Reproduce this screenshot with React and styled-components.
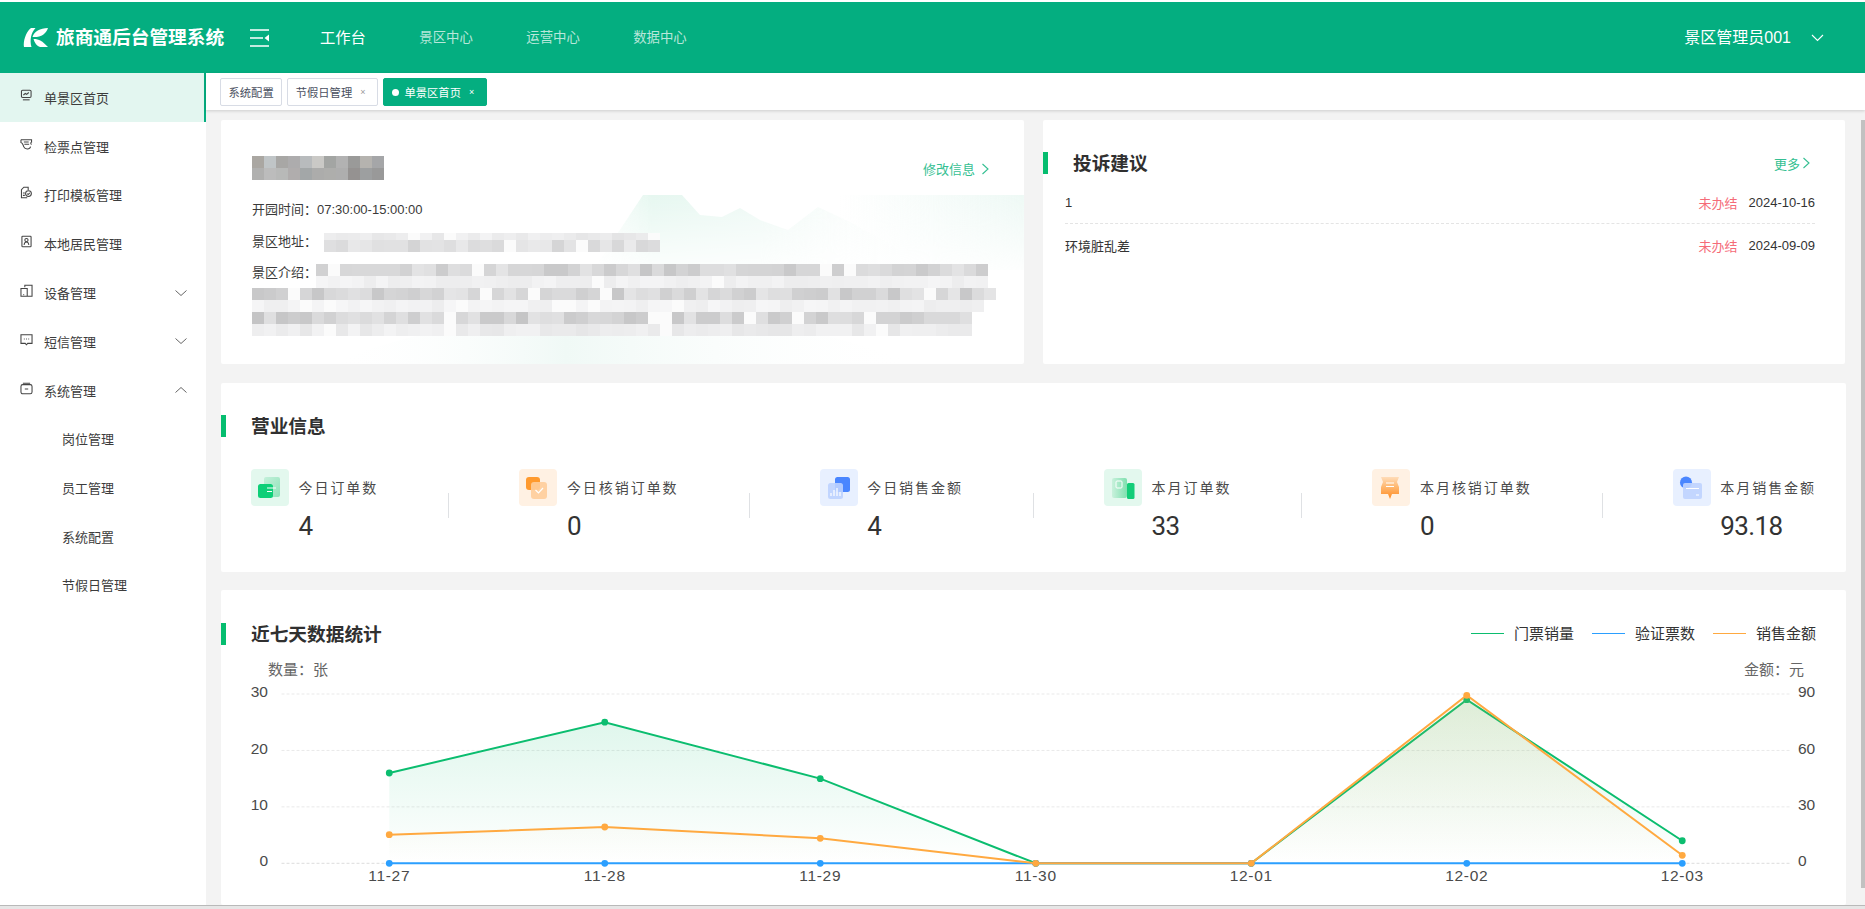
import React from "react";
import styled, { createGlobalStyle } from "styled-components";

const GREEN = "#04ae80";
const FONT = `"Liberation Sans", "Noto Sans CJK SC", sans-serif`;

const GlobalStyle = createGlobalStyle`
  html, body { margin: 0; padding: 0; background: #fff; }
  body { font-family: ${FONT}; color: #333; }
  * { box-sizing: border-box; }
`;

const Page = styled.div`
  width: 1865px;
  height: 909px;
  overflow: hidden;
  display: flex;
  flex-direction: column;
  padding-top: 2px;
  background: #fff;
`;

/* ---------- header ---------- */
const Header = styled.header`
  height: 71px;
  flex: none;
  display: flex;
  align-items: center;
  background: ${GREEN};
  color: #fff;
  padding: 0 41px 0 23px;
`;
const LogoTitle = styled.div`
  margin: 0 0 4px 8px;
  font-size: 18.7px;
  font-weight: 700;
  width: 168px;
  white-space: nowrap;
`;
const Collapse = styled.svg`
  width: 19px;
  height: 18px;
  margin-left: 26px;
`;
const Nav = styled.nav`
  display: flex;
  align-items: center;
  gap: 53.4px;
  margin: 0 0 4px 51px;
`;
const NavItem = styled.a`
  font-size: ${p => (p.$active ? "15.3px" : "13.4px")};
  color: ${p => (p.$active ? "#fff" : "rgba(255,255,255,.72)")};
`;
const User = styled.div`
  margin-left: auto;
  display: flex;
  align-items: center;
  gap: 20px;
  font-size: 16px;
  span { margin-bottom: 4px; }
  svg { width: 13px; height: 13px; }
`;

/* ---------- sidebar ---------- */
const Body = styled.div`
  flex: 1;
  min-height: 0;
  display: flex;
`;
const Side = styled.aside`
  width: 206px;
  flex: none;
  background: #fff;
`;
const SideRow = styled.div`
  height: 48.8px;
  display: flex;
  align-items: center;
  padding-left: 20px;
  font-size: 13px;
  color: #3c3c3c;
  background: ${p => (p.$active ? "#e3f6f0" : "transparent")};
  border-right: 2px solid ${p => (p.$active ? GREEN : "transparent")};
`;
const SideIcon = styled.svg`
  width: 13px;
  height: 13px;
  flex: none;
  margin-right: 11px;
  margin-top: -4px;
`;
const SideChevron = styled.svg`
  width: 12px;
  height: 12px;
  margin-left: auto;
  margin-right: 17px;
`;
const SubRow = styled.div`
  height: 48.6px;
  display: flex;
  align-items: center;
  padding-left: 62px;
  font-size: 13px;
  color: #3c3c3c;
`;

/* ---------- right part ---------- */
const Main = styled.main`
  flex: 1;
  min-width: 0;
  display: flex;
  flex-direction: column;
`;
const TabBar = styled.div`
  height: 37px;
  flex: none;
  display: flex;
  gap: 5px;
  padding: 5px 0 0 14px;
  background: #fff;
  box-shadow: 0 1px 3px rgba(0, 0, 0, 0.16);
  position: relative;
`;
const Tab = styled.div`
  height: 28px;
  display: flex;
  align-items: center;
  padding: 0 ${p => (p.$closable ? "12px" : "7.5px")} 0 ${p => (p.$active ? "8px" : "7.5px")};
  font-size: 11.3px;
  border-radius: 2px;
  border: 1px solid ${p => (p.$active ? GREEN : "#d8dce5")};
  background: ${p => (p.$active ? GREEN : "#fff")};
  color: ${p => (p.$active ? "#fff" : "#495060")};
`;
const TabDot = styled.i`
  width: 7px;
  height: 7px;
  border-radius: 50%;
  background: #fff;
  margin-right: 5px;
`;
const TabClose = styled.span`
  font-size: 9px;
  margin-left: 8px;
  color: ${p => (p.$light ? "#fff" : "#9a9a9a")};
`;
const Scroller = styled.div`
  flex: 1;
  min-height: 0;
  display: flex;
  background: #f3f3f3;
`;
const Content = styled.div`
  flex: 1;
  min-width: 0;
  padding: 10px 15px 0 15px;
`;
const Track = styled.div`
  width: 4px;
  flex: none;
  padding-top: 10px;
  background: #f3f3f3;
`;
const Thumb = styled.div`
  height: 768px;
  background: #c1c1c1;
`;
const TopGrid = styled.div`
  display: grid;
  grid-template-columns: 803px 802px;
  gap: 19px;
  height: 244px;
`;
const Card = styled.section`
  background: #fff;
  border-radius: 2px;
  position: relative;
  overflow: hidden;
  padding-top: ${p => p.$top || 0}px;
`;
const Art = styled.svg`
  position: absolute;
  inset: 0;
  width: 100%;
  height: 100%;
`;
const InfoBody = styled.div`
  position: relative;
  padding: 36px 34px 0 31px;
`;
const InfoHead = styled.div`
  height: 25px;
  display: flex;
  align-items: center;
  justify-content: flex-end;
  margin-bottom: 13px;
`;
const MoreLink = styled.a`
  display: flex;
  align-items: center;
  font-size: 13px;
  color: #35bf92;
  gap: ${p => p.$gap || 0}px;
  svg { width: 10px; height: 12px; }
`;
const InfoLine = styled.div`
  font-size: 13px;
  height: 31.6px;
  line-height: 31.6px;
  color: #3a3a3a;
`;
const SectionHead = styled.div`
  height: 22px;
  display: flex;
  align-items: center;
  padding-right: ${p => p.$right || 30}px;
`;
const Mark = styled.i`
  width: 5px;
  height: 22px;
  background: #05bd6f;
`;
const SectionTitle = styled.h2`
  margin: 0 0 4px 25px;
  font-size: 18.7px;
  font-weight: 700;
  color: #303030;
`;
const HeadEnd = styled.div`
  margin-left: auto;
`;
const Complaints = styled.div`
  margin-top: 8px;
  padding: 0 30px 0 22px;
`;
const ComplaintRow = styled.div`
  height: 42px;
  display: flex;
  align-items: center;
  font-size: 13px;
  color: #333;
  border-bottom: ${p => (p.$last ? "none" : "1px dashed #e4e4e4")};
`;
const Status = styled.span`
  margin-left: auto;
  color: #f56b78;
`;
const DateText = styled.span`
  margin-left: 11px;
`;
const StatsCard = styled(Card)`
  height: 189px;
  margin-top: 19px;
`;
const StatsRow = styled.div`
  margin-top: 32px;
  padding: 0 30px;
  display: flex;
  justify-content: space-between;
  align-items: flex-start;
`;
const Stat = styled.div`
  display: flex;
  gap: 9.5px;
`;
const StatIcon = styled.div`
  width: 38px;
  height: 37px;
  border-radius: 4px;
  background: ${p => p.$bg};
  svg { display: block; width: 38px; height: 37px; }
`;
const StatText = styled.div`
  padding-top: 9px;
`;
const StatLabel = styled.div`
  font-size: 14px;
  line-height: 20px;
  letter-spacing: 1.95px;
  color: #4a4a4a;
  white-space: nowrap;
`;
const StatValue = styled.div`
  margin-top: 13px;
  font-family: Roboto, sans-serif;
  font-size: 26px;
  line-height: 30px;
  letter-spacing: -0.6px;
  color: #333;
`;
const StatDivider = styled.i`
  width: 1px;
  height: 25px;
  margin-top: 24px;
  background: #dfe1e4;
`;
const ChartCard = styled(Card)`
  height: 315px;
  margin-top: 18px;
`;
const Legend = styled.div`
  display: flex;
  gap: 18.5px;
`;
const LegendItem = styled.div`
  display: flex;
  align-items: center;
  font-size: 15px;
  color: #333;
  margin-bottom: 4px;
  &::before {
    content: "";
    width: 33px;
    height: 1.5px;
    margin: 3px 9.5px 0 0;
    background: ${p => p.$color};
  }
`;
const ChartSvg = styled.svg`
  display: block;
  margin-top: 15px;
  width: 1624px;
  height: 245px;
  text {
    font-family: ${FONT};
    font-size: 15.5px;
    fill: #4a4a4a;
  }
  .unit { fill: #666; font-size: 15px; }
  .day { letter-spacing: 0.7px; }
`;
const BottomEdge = styled.div`
  height: 4px;
  flex: none;
  background: #e6e6e6;
  border-top: 1px solid #b9b9b9;
`;

/* ---------- drawings ---------- */
const Stroke = { fill: "none", stroke: "#444", strokeWidth: 1.1 };

const sideIcons = {
  monitor: (
    <g {...Stroke}>
      <rect x="1.5" y="1" width="10" height="7.5" rx="1.2" />
      <path d="M3.5 6l2-1.6 1.4 1 2.2-2" />
      <path d="M3 11h7" />
    </g>
  ),
  ticket: (
    <g {...Stroke}>
      <path d="M1 1.5h11v2.5a1.3 1.3 0 0 0 0 2.4" />
      <path d="M1 1.5v3c2 .4 2 2.4 3 4.5 1 2.6 6 3.4 7-.2" />
      <path d="M4 4h5M4.5 6.3h5" />
    </g>
  ),
  print: (
    <g {...Stroke}>
      <path d="M7.5 12H1.5V3.5L4 1h4.5v3" />
      <circle cx="8.8" cy="7.6" r="3" />
      <path d="M7.5 7.6l1 1 1.6-1.8M3 7h2M3 9.5h2" />
    </g>
  ),
  id: (
    <g {...Stroke}>
      <rect x="2" y="1" width="9.5" height="11" rx=".8" />
      <circle cx="6.7" cy="5" r="1.7" />
      <path d="M4.2 10c.3-2 1.4-3 2.5-3s2.2 1 2.5 3" />
    </g>
  ),
  device: (
    <g {...Stroke}>
      <path d="M5 3V1h7.5v11.5H1V4.5h6.5v8" />
      <path d="M3.5 10.8h.8" />
    </g>
  ),
  chat: (
    <g {...Stroke}>
      <path d="M1 1.5h11.5v9H8l-1.3 1.5-1.3-1.5H1z" />
      <path d="M4 6h.9M6.3 6h.9M8.6 6h.9" />
    </g>
  ),
  box: (
    <g {...Stroke}>
      <rect x="1" y="2.5" width="11.5" height="9.5" rx="1.8" />
      <path d="M3 1h7.5M5 7h3.5" />
    </g>
  )
};

const SideGlyph = ({ name }) => <SideIcon viewBox="0 0 13.5 13">{sideIcons[name]}</SideIcon>;

const Chevron = ({ up, color = "#666" }) => (
  <SideChevron viewBox="0 0 12 12">
    <path d={up ? "M.5 8.5L6 3.5l5.5 5" : "M.5 3.5L6 8.5l5.5-5"} fill="none" stroke={color} strokeWidth="1" />
  </SideChevron>
);

const RightArrow = () => (
  <svg viewBox="0 0 10 12">
    <path d="M2.5 1l5.5 5-5.5 5" fill="none" stroke="#35bf92" strokeWidth="1.1" />
  </svg>
);

const Logo = () => (
  <svg width="25" height="19" viewBox="0 0 25 19">
    <path d="M1 19C0 14 2.5 4 8 0h4.5C8 5 6.5 12 8.5 19z" fill="#fff" />
    <path d="M9.5 9C11 3 17 .5 25 0c-2 6-7 9.5-15.5 9z" fill="#fff" />
    <path d="M10.5 11c6 0 8.5 2 14.5 8h-8c-3-1-5.5-4-6.5-8z" fill="#fff" />
  </svg>
);

const StatIcons = {
  orders: (
    <>
      <defs>
        <linearGradient id="g1" x1="0" y1="0" x2="1" y2="1">
          <stop offset="0" stopColor="#c4f0da" />
          <stop offset="1" stopColor="#8fe3b9" />
        </linearGradient>
      </defs>
      <rect x="13" y="8" width="16" height="20" rx="2" fill="url(#g1)" />
      <rect x="7" y="15" width="15" height="14" rx="2.5" fill="#0ecf78" />
      <path d="M16 19h9M16 22.5h5" stroke="#fff" strokeWidth="1" />
    </>
  ),
  verify: (
    <>
      <rect x="7" y="8" width="14" height="13" rx="3" fill="#ff9a2e" />
      <rect x="12" y="13" width="16" height="17" rx="3" fill="#ffcd9a" opacity=".9" />
      <path d="M16.5 21l3 3 4.5-5" fill="none" stroke="#fff" strokeWidth="1.2" />
    </>
  ),
  sales: (
    <>
      <rect x="15" y="8" width="15" height="15" rx="2.5" fill="#4a86ff" />
      <rect x="8" y="14" width="15" height="16" rx="2.5" fill="#bcd2ff" opacity=".9" />
      <path d="M11 27v-3M14 27v-6M17 27v-8M20 27v-4" stroke="#fff" strokeWidth="1.2" />
    </>
  ),
  monthOrders: (
    <>
      <defs>
        <linearGradient id="g4" x1="0" y1="0" x2="1" y2="0">
          <stop offset="0" stopColor="#c9f1dc" />
          <stop offset="1" stopColor="#7fe0af" />
        </linearGradient>
      </defs>
      <rect x="8" y="9" width="15" height="20" rx="2" fill="url(#g4)" />
      <rect x="23" y="14" width="7.5" height="16" rx="1.5" fill="#12cd78" />
      <rect x="12" y="12" width="6" height="7" rx="1" fill="none" stroke="#fff" strokeWidth="1" />
    </>
  ),
  monthVerify: (
    <>
      <defs>
        <linearGradient id="g5" x1="0" y1="0" x2="0" y2="1">
          <stop offset="0" stopColor="#ffdcb8" />
          <stop offset=".45" stopColor="#ffb870" />
          <stop offset="1" stopColor="#ff8a20" />
        </linearGradient>
      </defs>
      <path d="M9 8h18l-2 5 2 5v7H20l-2 5-2-5H9v-7l2-5z" fill="url(#g5)" />
      <path d="M14 14h8M14 17.5h8" stroke="#fff" strokeWidth="1.2" />
    </>
  ),
  monthSales: (
    <>
      <circle cx="13" cy="13.5" r="6" fill="#4a86ff" />
      <rect x="10" y="14" width="19" height="16" rx="2" fill="#bfd4ff" opacity=".92" />
      <path d="M13 19.5h13M23 26h3" stroke="#fff" strokeWidth="1.2" />
    </>
  )
};

// pixelated cover over the hidden text, colours spread per cell
const tone = (base, spread, row, i) => {
  const n = Math.sin((i + 3) * 12.9898 + row * 78.233) * 43758.5453;
  const r = n - Math.floor(n);
  if (r > 0.93) return "#fbfbfb";
  const v = Math.round(base + (r - 0.5) * spread);
  return `rgb(${v},${v},${v + 1})`;
};
const mosaic = [
  { y: 233, h: 7, x0: 324, x1: 660, base: 236, spread: 16 },
  { y: 240, h: 12, x0: 324, x1: 660, base: 224, spread: 24 },
  { y: 264, h: 12, x0: 316, x1: 996, base: 214, spread: 32 },
  { y: 276, h: 12, x0: 316, x1: 996, base: 241, spread: 10 },
  { y: 288, h: 12, x0: 252, x1: 996, base: 216, spread: 34 },
  { y: 300, h: 12, x0: 252, x1: 984, base: 242, spread: 10 },
  { y: 312, h: 12, x0: 252, x1: 972, base: 212, spread: 34 },
  { y: 324, h: 12, x0: 252, x1: 978, base: 237, spread: 14 }
];
const nameCells = [
  ["#aaa7a2", "#c0c5c7", "#a8a7a5", "#adacad", "#b8bbbd", "#cac9c6", "#a3a5a3", "#b2b2b2", "#9a9a99", "#b5b3af", "#a5a6a8"],
  ["#b0b0af", "#bcbcbc", "#b8b9b8", "#b0adad", "#a3a7a8", "#acacab", "#aeaeac", "#aeaeae", "#959291", "#9d9fa0", "#999999"]
];

const InfoArt = () => (
  <Art viewBox="221 120 803 244" preserveAspectRatio="none">
    <defs>
      <linearGradient id="fadeDown" x1="0" y1="0" x2="0" y2="1">
        <stop offset="0" stopColor="#fff" />
        <stop offset="1" stopColor="#000" />
      </linearGradient>
      <mask id="fadeMask" maskUnits="userSpaceOnUse" x="221" y="190" width="803" height="100">
        <rect x="221" y="195" width="803" height="85" fill="url(#fadeDown)" />
      </mask>
      <linearGradient id="hill" x1="0" y1="0" x2="1" y2="0">
        <stop offset="0" stopColor="#e6f7f0" stopOpacity="0" />
        <stop offset=".2" stopColor="#e6f7f0" />
        <stop offset=".55" stopColor="#eef9f5" />
        <stop offset="1" stopColor="#f4fbf8" stopOpacity="0" />
      </linearGradient>
      <linearGradient id="far" x1="0" y1="0" x2="1" y2="0">
        <stop offset="0" stopColor="#eef9f5" stopOpacity="0" />
        <stop offset="1" stopColor="#eef9f5" />
      </linearGradient>
      <linearGradient id="low" x1="0" y1="0" x2="1" y2="0">
        <stop offset="0" stopColor="#fff" stopOpacity="0" />
        <stop offset=".4" stopColor="#f0f9f6" />
        <stop offset="1" stopColor="#fff" stopOpacity="0" />
      </linearGradient>
    </defs>
    <g mask="url(#fadeMask)">
      <path d="M590 275L643 195H682L700 215L722 217L740 208L760 220L788 230L818 207L850 222L900 250V290H590z" fill="url(#hill)" />
      <rect x="840" y="195" width="184" height="75" fill="url(#far)" />
    </g>
    <path d="M330 364C400 335 470 322 520 325L620 312L700 330L800 328L860 345L920 364z" fill="url(#low)" />
    {nameCells.map((row, r) =>
      row.map((c, i) => <rect key={`${r}-${i}`} x={252 + i * 12} y={156 + r * 12} width="12" height="12" fill={c} />)
    )}
    {mosaic.map((row, r) =>
      Array.from({ length: Math.floor((row.x1 - row.x0) / 12) }, (_, i) => (
        <rect
          key={`${r}-${i}`}
          x={row.x0 + i * 12}
          y={row.y}
          width="12"
          height={row.h}
          fill={tone(row.base, row.spread, r, i)}
        />
      ))
    )}
  </Art>
);

/* ---------- chart ---------- */
const days = ["11-27", "11-28", "11-29", "11-30", "12-01", "12-02", "12-03"];
const plot = { left: 281.5, right: 1790, top: 694, bottom: 863.3 };
const step = (plot.right - plot.left) / 7;
const xAt = i => plot.left + step * (i + 0.5);
const yAt = (v, max) => plot.bottom - (v / max) * (plot.bottom - plot.top);

const series = [
  { id: "tickets", color: "#0bbd6f", max: 30, values: [16, 25, 15, 0, 0, 29, 4], area: 0.15 },
  { id: "checked", color: "#2b9fff", max: 30, values: [0, 0, 0, 0, 0, 0, 0], area: 0 },
  { id: "amount", color: "#ffa940", max: 90, values: [15.2, 19.3, 13.3, 0, 0, 89.3, 4.25], area: 0.11 }
];

const Chart = () => (
  <ChartSvg viewBox="221 660 1624 245">
    <defs>
      {series.map(s => (
        <linearGradient key={s.id} id={`area-${s.id}`} x1="0" y1="0" x2="0" y2="1">
          <stop offset="0" stopColor={s.color} stopOpacity={s.area} />
          <stop offset="1" stopColor={s.color} stopOpacity="0" />
        </linearGradient>
      ))}
    </defs>
    <text className="unit" x="268" y="671" dominantBaseline="middle">数量：张</text>
    <text className="unit" x="1744" y="671" dominantBaseline="middle">金额：元</text>
    {[0, 1, 2, 3].map(i => {
      const y = yAt(i * 10, 30);
      return (
        <g key={i}>
          <line
            x1={plot.left}
            x2={plot.right}
            y1={y}
            y2={y}
            stroke={i === 0 ? "#dcdcdc" : "#e9e9e9"}
            strokeDasharray="3 2"
          />
          <text x="268" y={y - 1} textAnchor="end" dominantBaseline="middle">{i * 10}</text>
          <text x="1798" y={y - 1} dominantBaseline="middle">{i * 30}</text>
        </g>
      );
    })}
    {days.map((d, i) => (
      <text className="day" key={d} x={xAt(i)} y="877" textAnchor="middle" dominantBaseline="middle">{d}</text>
    ))}
    {series.map(s => {
      const pts = s.values.map((v, i) => [xAt(i), yAt(v, s.max)]);
      const line = pts.map(p => p.join(",")).join(" ");
      return (
        <g key={s.id}>
          {s.area > 0 && (
            <polygon
              points={`${xAt(0)},${plot.bottom} ${line} ${xAt(6)},${plot.bottom}`}
              fill={`url(#area-${s.id})`}
            />
          )}
          <polyline points={line} fill="none" stroke={s.color} strokeWidth="2" />
          {pts.map(([x, y], i) => (
            <circle key={i} cx={x} cy={y} r="3.4" fill={s.color} />
          ))}
        </g>
      );
    })}
  </ChartSvg>
);

/* ---------- data ---------- */
const sideTop = [
  { name: "monitor", label: "单景区首页", active: true },
  { name: "ticket", label: "检票点管理" },
  { name: "print", label: "打印模板管理" },
  { name: "id", label: "本地居民管理" },
  { name: "device", label: "设备管理", arrow: "down" },
  { name: "chat", label: "短信管理", arrow: "down" },
  { name: "box", label: "系统管理", arrow: "up" }
];
const sideSub = ["岗位管理", "员工管理", "系统配置", "节假日管理"];

const stats = [
  { icon: "orders", bg: "#e3f8ee", label: "今日订单数", value: "4" },
  { icon: "verify", bg: "#fff1e3", label: "今日核销订单数", value: "0" },
  { icon: "sales", bg: "#e8f0ff", label: "今日销售金额", value: "4" },
  { icon: "monthOrders", bg: "#e3f8ee", label: "本月订单数", value: "33" },
  { icon: "monthVerify", bg: "#fff1e3", label: "本月核销订单数", value: "0" },
  { icon: "monthSales", bg: "#e8f0ff", label: "本月销售金额", value: "93.18" }
];

const complaints = [
  { text: "1", date: "2024-10-16" },
  { text: "环境脏乱差", date: "2024-09-09" }
];

export default function App() {
  return (
    <Page>
      <GlobalStyle />
      <Header>
        <Logo />
        <LogoTitle>旅商通后台管理系统</LogoTitle>
        <Collapse viewBox="0 0 19 18">
          <path d="M0 1h19M0 9h13M0 17h19" stroke="#fff" strokeWidth="1.6" />
          <path d="M19 5.5V12.5L14.5 9z" fill="#fff" />
        </Collapse>
        <Nav>
          <NavItem $active>工作台</NavItem>
          <NavItem>景区中心</NavItem>
          <NavItem>运营中心</NavItem>
          <NavItem>数据中心</NavItem>
        </Nav>
        <User>
          <span>景区管理员001</span>
          <svg viewBox="0 0 13 13">
            <path d="M1 4l5.5 5.5L12 4" fill="none" stroke="#fff" strokeWidth="1.1" />
          </svg>
        </User>
      </Header>
      <Body>
        <Side>
          {sideTop.map(item => (
            <SideRow key={item.label} $active={item.active}>
              <SideGlyph name={item.name} />
              {item.label}
              {item.arrow && <Chevron up={item.arrow === "up"} />}
            </SideRow>
          ))}
          {sideSub.map(label => (
            <SubRow key={label}>{label}</SubRow>
          ))}
        </Side>
        <Main>
          <TabBar>
            <Tab>系统配置</Tab>
            <Tab $closable>
              节假日管理
              <TabClose>×</TabClose>
            </Tab>
            <Tab $active $closable>
              <TabDot />
              单景区首页
              <TabClose $light>×</TabClose>
            </Tab>
          </TabBar>
          <Scroller>
            <Content>
              <TopGrid>
                <Card>
                  <InfoArt />
                  <InfoBody>
                    <InfoHead>
                      <MoreLink $gap={5}>
                        修改信息
                        <RightArrow />
                      </MoreLink>
                    </InfoHead>
                    <InfoLine>开园时间：07:30:00-15:00:00</InfoLine>
                    <InfoLine>景区地址：</InfoLine>
                    <InfoLine>景区介绍：</InfoLine>
                  </InfoBody>
                </Card>
                <Card $top={32}>
                  <SectionHead $right={34}>
                    <Mark />
                    <SectionTitle>投诉建议</SectionTitle>
                    <HeadEnd>
                      <MoreLink $gap={1}>
                        更多
                        <RightArrow />
                      </MoreLink>
                    </HeadEnd>
                  </SectionHead>
                  <Complaints>
                    {complaints.map((c, i) => (
                      <ComplaintRow key={c.date} $last={i === complaints.length - 1}>
                        {c.text}
                        <Status>未办结</Status>
                        <DateText>{c.date}</DateText>
                      </ComplaintRow>
                    ))}
                  </Complaints>
                </Card>
              </TopGrid>
              <StatsCard $top={32}>
                <SectionHead>
                  <Mark />
                  <SectionTitle>营业信息</SectionTitle>
                </SectionHead>
                <StatsRow>
                  {stats.map((s, i) => (
                    <React.Fragment key={s.label}>
                      {i > 0 && <StatDivider />}
                      <Stat>
                        <StatIcon $bg={s.bg}>
                          <svg viewBox="0 0 38 37">{StatIcons[s.icon]}</svg>
                        </StatIcon>
                        <StatText>
                          <StatLabel>{s.label}</StatLabel>
                          <StatValue>{s.value}</StatValue>
                        </StatText>
                      </Stat>
                    </React.Fragment>
                  ))}
                </StatsRow>
              </StatsCard>
              <ChartCard $top={33}>
                <SectionHead>
                  <Mark />
                  <SectionTitle>近七天数据统计</SectionTitle>
                  <HeadEnd>
                    <Legend>
                      <LegendItem $color="#0bbd6f">门票销量</LegendItem>
                      <LegendItem $color="#2b9fff">验证票数</LegendItem>
                      <LegendItem $color="#ffa940">销售金额</LegendItem>
                    </Legend>
                  </HeadEnd>
                </SectionHead>
                <Chart />
              </ChartCard>
            </Content>
            <Track>
              <Thumb />
            </Track>
          </Scroller>
        </Main>
      </Body>
      <BottomEdge />
    </Page>
  );
}
